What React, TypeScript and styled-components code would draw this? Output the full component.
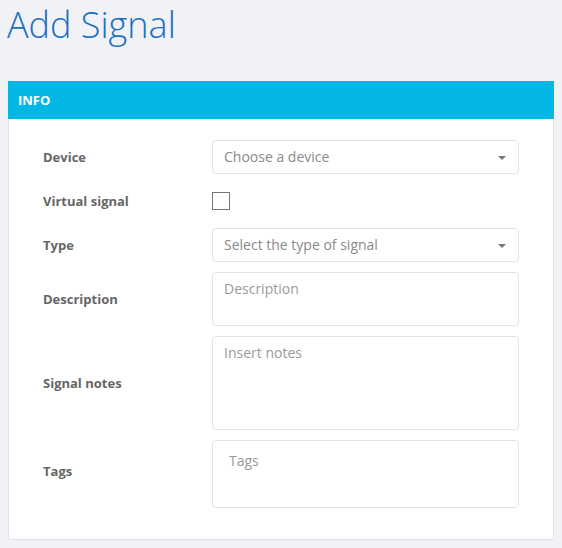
import React from "react";
import styled, { createGlobalStyle } from "styled-components";

const Global = createGlobalStyle`
  html, body { margin: 0; padding: 0; background: #f1f2f6; }
  body { font-family: "Open Sans", "Liberation Sans", sans-serif; }
  * { box-sizing: border-box; }
`;

const Page = styled.div`
  padding: 0 8px;
  width: 562px;
`;

const Title = styled.h1`
  margin: 0 0 32px -1px;
  font-size: 36px;
  line-height: 49px;
  font-weight: 300;
  color: #1b6ec4;
`;

const Card = styled.section`
  background: #fff;
  border: 1px solid #dfe2e6;
  border-top: none;
  width: 546px;
`;

const CardHeader = styled.div`
  height: 38px;
  background: #02b7e4;
  color: #fff;
  font-size: 13px;
  font-weight: 700;
  display: flex;
  align-items: center;
  padding-left: 10px;
  margin: 0 -1px;
`;

const CardBody = styled.div`
  padding: 21px 34px 31px 34px;
  display: flex;
  flex-direction: column;
  gap: 10px;
`;

const Row = styled.div`
  display: grid;
  grid-template-columns: 169px 307px;
  align-items: center;
`;

const Label = styled.label<{ $lift?: number }>`
  font-size: 13px;
  font-weight: 700;
  color: #666;
  margin-bottom: ${(p) => (p.$lift ?? 0) * 2}px;
`;

const Select = styled.div`
  height: 34px;
  border: 1px solid #e2e4e7;
  border-radius: 4px;
  display: flex;
  align-items: center;
  justify-content: space-between;
  padding: 0 12px 1px 11px;
  font-size: 14px;
  color: #8a8a8a;
`;

const Caret = styled.span`
  width: 0;
  height: 0;
  border-left: 4px solid transparent;
  border-right: 4px solid transparent;
  border-top: 4px solid #777;
  margin-top: 2px;
`;

const CheckCell = styled.div`
  height: 34px;
  display: flex;
  align-items: center;
`;

const Checkbox = styled.span`
  width: 18px;
  height: 18px;
  border: 1px solid #777;
  background: #fff;
`;

const TextArea = styled.div<{ $h: number; $padX?: number; $padY?: number }>`
  height: ${(p) => p.$h}px;
  border: 1px solid #e2e4e7;
  border-radius: 4px;
  padding: ${(p) => p.$padY ?? 6}px ${(p) => p.$padX ?? 11}px;
  font-size: 14px;
  line-height: 20px;
  color: #9a9a9a;
`;

export default function App() {
  return (
    <Page>
      <Global />
      <Title>Add Signal</Title>
      <Card>
        <CardHeader>INFO</CardHeader>
        <CardBody>
          <Row>
            <Label>Device</Label>
            <Select>
              Choose a device
              <Caret />
            </Select>
          </Row>
          <Row>
            <Label>Virtual signal</Label>
            <CheckCell>
              <Checkbox />
            </CheckCell>
          </Row>
          <Row>
            <Label>Type</Label>
            <Select>
              Select the type of signal
              <Caret />
            </Select>
          </Row>
          <Row>
            <Label>Description</Label>
            <TextArea $h={54}>Description</TextArea>
          </Row>
          <Row>
            <Label>Signal notes</Label>
            <TextArea $h={94}>Insert notes</TextArea>
          </Row>
          <Row>
            <Label $lift={3}>Tags</Label>
            <TextArea $h={68} $padX={16} $padY={10}>Tags</TextArea>
          </Row>
        </CardBody>
      </Card>
    </Page>
  );
}
